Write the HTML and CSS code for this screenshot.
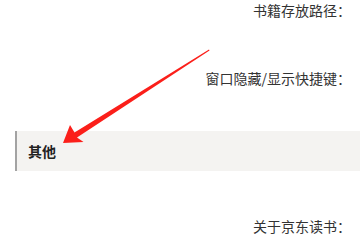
FILE: index.html
```html
<!DOCTYPE html>
<html lang="zh-CN">
<head>
  <meta charset="UTF-8">
  <title>设置</title>
  <link rel="stylesheet" href="styles.css">
</head>
<body>
  <div class="settings">
    <div class="form-row first">
      <label class="form-label">书籍存放路径：</label>
    </div>
    <div class="form-row">
      <label class="form-label">窗口隐藏/显示快捷键：</label>
    </div>
    <h3 class="section-title">其他</h3>
    <div class="form-row about">
      <label class="form-label">关于京东读书：</label>
    </div>
  </div>

  <svg class="mark-arrow" width="360" height="238" viewBox="0 0 360 238">
    <polygon points="63,143 70,125 74.5,132.5 209,49.5 209.5,50.5 77,137.5 83.5,142" fill="#fb1f1a"/>
  </svg>
</body>
</html>
```

FILE: styles.css
```css
body {
  margin: 0;
  padding: 0;
  background: #fff;
  font-family: "Noto Sans CJK SC", "Noto Sans", sans-serif;
  color: #333;
  overflow: hidden;
}
.settings {
  width: 360px;
}
.form-row {
  height: 20px;
  margin-top: 48px;
}
.form-row.first {
  margin-top: 0;
}
.form-row.about {
  margin-top: 45px;
}
.form-label {
  display: block;
  width: 351px;
  text-align: right;
  font-size: 14px;
  line-height: 20px;
}
.section-title {
  margin: 43px 0 0 15px;
  height: 40px;
  line-height: 40px;
  padding-left: 11px;
  border-left: 2px solid #a3a3a3;
  background: #f4f3f1;
  font-size: 14px;
  font-weight: bold;
  color: #222;
}
.mark-arrow {
  position: absolute;
  left: 0;
  top: 0;
}
```
